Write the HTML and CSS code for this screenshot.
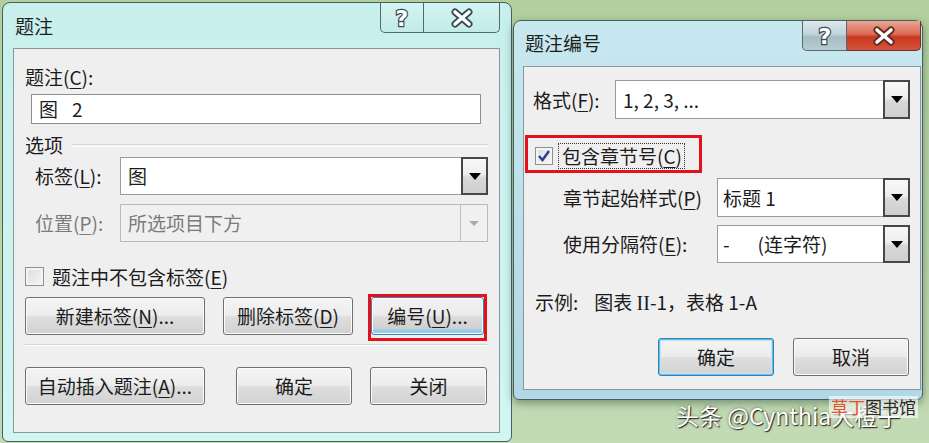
FILE: index.html
```html
<!DOCTYPE html>
<html lang="zh-CN">
  <head>
    <meta charset="utf-8">
    <title>题注</title>
    <link rel="stylesheet" href="styles.css">
  </head>
  <body>
    <div class="desktop">

      <!-- 题注 dialog -->
      <div class="dialog caption-dialog">
        <div class="titlebar">
          <span class="title">题注</span>
          <div class="caption-buttons">
            <span class="cbtn help">
              <svg width="20" height="26" viewBox="0 0 20 26"><text x="10" y="21" text-anchor="middle">?</text></svg>
            </span>
            <span class="cbtn close">
              <svg width="26" height="20" viewBox="0 0 26 20"><path class="x-outline" d="M6 4 L20 16 M20 4 L6 16"/><path class="x-fill" d="M6 4 L20 16 M20 4 L6 16"/></svg>
            </span>
          </div>
        </div>

        <div class="client">
          <div class="caption-label">题注(<u>C</u>):</div>
          <div class="textbox"><span>图</span><span class="caption-num">2</span></div>

          <div class="group-head"><span>选项</span><i class="rule"></i></div>

          <div class="field-row">
            <span class="field-name">标签(<u>L</u>):</span>
            <div class="combo label-combo"><span class="combo-value">图</span><span class="combo-drop"></span></div>
          </div>
          <div class="field-row is-disabled">
            <span class="field-name">位置(<u>P</u>):</span>
            <div class="combo label-combo"><span class="combo-value">所选项目下方</span><span class="combo-drop"></span></div>
          </div>

          <div class="check exclude-check">
            <span class="check-box"></span>
            <span>题注中不包含标签(<u>E</u>)</span>
          </div>

          <div class="button-row label-actions">
            <button class="btn btn-new">新建标签(<u>N</u>)...</button>
            <button class="btn btn-delete">删除标签(<u>D</u>)</button>
            <button class="btn btn-number is-hot">编号(<u>U</u>)...<span class="mark"></span></button>
          </div>

          <div class="etched"></div>

          <div class="button-row caption-actions">
            <button class="btn btn-auto">自动插入题注(<u>A</u>)...</button>
            <button class="btn btn-ok">确定</button>
            <button class="btn btn-close">关闭</button>
          </div>
        </div>
      </div>

      <!-- 题注编号 dialog -->
      <div class="dialog numbering-dialog">
        <div class="titlebar">
          <span class="title">题注编号</span>
          <div class="caption-buttons">
            <span class="cbtn help">
              <svg width="20" height="26" viewBox="0 0 20 26"><text x="10" y="21" text-anchor="middle">?</text></svg>
            </span>
            <span class="cbtn close">
              <svg width="26" height="20" viewBox="0 0 26 20"><path class="x-outline" d="M6 4 L20 16 M20 4 L6 16"/><path class="x-fill" d="M6 4 L20 16 M20 4 L6 16"/></svg>
            </span>
          </div>
        </div>

        <div class="client">
          <div class="field-row format-row">
            <span class="field-name">格式(<u>F</u>):</span>
            <div class="combo"><span class="combo-value">1, 2, 3, ...</span><span class="combo-drop"></span></div>
          </div>

          <div class="chapter-toggle">
            <span class="check-box is-checked">
              <svg width="14" height="14" viewBox="0 0 14 14"><path d="M2 7 L5.5 11 L12 2"/></svg>
            </span>
            <span class="focus-text">包含章节号(<u>C</u>)</span>
            <span class="mark"></span>
          </div>

          <div class="field-row sub-row">
            <span class="field-name">章节起始样式(<u>P</u>)</span>
            <div class="combo"><span class="combo-value">标题 1</span><span class="combo-drop"></span></div>
          </div>
          <div class="field-row sub-row">
            <span class="field-name">使用分隔符(<u>E</u>):</span>
            <div class="combo"><span class="combo-value"><span>-</span><span class="sep-name">(连字符)</span></span><span class="combo-drop"></span></div>
          </div>

          <div class="example"><span class="example-head">示例:</span>图表 <span class="roman">II</span>-1，表格 1-A</div>

          <div class="button-row dialog-actions">
            <button class="btn is-default">确定</button>
            <button class="btn">取消</button>
          </div>
        </div>
      </div>

    </div>

    <div class="watermark">头条 @Cynthia大橙子</div>
    <div class="stamp"><em>草丁</em>图书馆</div>
  </body>
</html>
```

FILE: styles.css
```css
html, body {
    margin: 0;
}

body {
    position: relative;
    width: 929px;
    height: 443px;
    overflow: hidden;

    font-family: "Noto Sans CJK SC", "Microsoft YaHei", sans-serif;
    font-size: 19px;
    line-height: 24px;
    color: #1b1b1b;

    background: linear-gradient(to bottom, #b3cf9e 0%, #bad5a8 55%, #c3dbb5 100%);
}

u {
    text-decoration-thickness: 1px;
    text-underline-offset: 3px;
}

.desktop {
    display: flex;
    align-items: flex-start;
    padding: 2px 0 0 2px;
}

/* window frames */

.dialog {
    box-sizing: border-box;
    display: flex;
    flex-direction: column;

    border: 1px solid #4a5d5f;
    border-radius: 8px 8px 6px 6px;
}

.caption-dialog {
    width: 510px;
    height: 440px;
    padding: 0 11px 8px 10px;

    background: linear-gradient(to bottom, #c7f0ec, #d2f6f2);
}

.numbering-dialog {
    width: 410px;
    height: 380px;
    margin: 18px 0 0 1px;
    padding: 0 1px 9px 9px;

    background: linear-gradient(to bottom, #c8e8f0, #b0d8e6);
    box-shadow: 0 3px 8px rgba(40, 70, 45, .5);
}

.titlebar {
    display: flex;
    justify-content: space-between;
    align-items: flex-start;
    height: 45px;
    flex: none;
}

.title {
    padding: 11px 0 0 2px;
    font-size: 19px;
    color: #1e1e1e;
}

.numbering-dialog .title {
    padding-top: 10px;
}

.caption-buttons {
    display: flex;
}

.cbtn {
    box-sizing: border-box;
    display: flex;
    justify-content: center;
    align-items: center;
    height: 30px;

    border: 1px solid #55696c;
    border-top: none;

    background: linear-gradient(to bottom, #d3f5f2, #c2ebe7);
}

.cbtn.help {
    width: 44px;
    border-bottom-left-radius: 5px;
}

.cbtn.close {
    width: 76px;
    border-left: none;
    border-bottom-right-radius: 5px;
}

.numbering-dialog .cbtn.help {
    width: 45px;
    background: linear-gradient(to bottom, #dce8ec 0%, #c2d4db 45%, #a6bcc5 55%, #b9ccd3 100%);
}

.numbering-dialog .cbtn.close {
    width: 74px;
    border-color: #6a3028;
    background: linear-gradient(to bottom, #eaa595 0%, #dc6a55 45%, #c9371f 55%, #d6543c 100%);
}

.cbtn text {
    font-family: "DejaVu Sans", sans-serif;
    font-size: 22px;
    font-weight: 700;
    fill: #fff;
    stroke: #3a4a50;
    stroke-width: 2.4px;
    paint-order: stroke fill;
}

.x-outline {
    stroke: #3a4a50;
    stroke-width: 7px;
    stroke-linecap: round;
}

.x-fill {
    stroke: #fff;
    stroke-width: 3.6px;
    stroke-linecap: round;
}

.numbering-dialog .x-outline {
    stroke: #5e2a22;
}

.client {
    box-sizing: border-box;
    display: flex;
    flex-direction: column;
    flex: 1;
    padding: 0 11px;

    border: 1px solid #8a989c;
    background: #f0eff0;
}

/* fields */

.caption-label {
    margin-top: 16px;
}

.textbox {
    box-sizing: border-box;
    display: flex;
    align-items: center;
    height: 30px;
    width: 450px;
    margin: 5px 0 0 6px;
    padding-left: 7px;

    border: 1px solid #8d8d8d;
    background: #fff;
}

.caption-num {
    margin-left: 14px;
}

.group-head {
    display: flex;
    align-items: center;
    margin-top: 9px;
}

.rule {
    flex: 1;
    height: 1px;
    margin-left: 9px;
    border-top: 1px solid #d9d9d9;
    border-bottom: 1px solid #fff;
}

.field-row {
    display: flex;
    align-items: center;
}

.field-name {
    flex: none;
}

.combo {
    box-sizing: border-box;
    display: flex;
    align-items: center;
    height: 38px;

    border: 1px solid #9b9b9b;
    background: #fff;
}

.combo-value {
    flex: 1;
    padding-left: 7px;
    white-space: pre;
}

.combo-drop {
    box-sizing: border-box;
    align-self: stretch;
    display: flex;
    justify-content: center;
    align-items: center;
    width: 27px;
    margin: -1px -1px -1px 0;

    border: 2px solid #474747;
    background: linear-gradient(to bottom, #f8f8f8 0%, #eeeeee 45%, #d8d8d8 55%, #cfcfcf 100%);
}

.combo-drop::after {
    content: "";
    border-left: 6px solid transparent;
    border-right: 6px solid transparent;
    border-top: 7px solid #000;
}

.caption-dialog .field-row {
    padding-left: 10px;
}

.caption-dialog .field-row .field-name {
    width: 85px;
}

.label-combo {
    width: 368px;
}

.caption-dialog .field-row:first-of-type {
    margin-top: 14px;
}

.caption-dialog .field-row.is-disabled {
    margin-top: 9px;
}

.is-disabled .field-name,
.is-disabled .combo-value {
    color: #7b7b7b;
}

.is-disabled .combo {
    border-color: #b9b9b9;
    background: #f0f0f0;
}

.is-disabled .combo-drop {
    margin: 0;
    border: 1px solid #c2c2c2;
    border-width: 0 0 0 1px;
    background: #f0f0f0;
}

.is-disabled .combo-drop::after {
    border-left-width: 5px;
    border-right-width: 5px;
    border-top: 5px solid #aaaaaa;
}

/* checkboxes */

.check {
    display: flex;
    align-items: center;
    height: 19px;
}

.exclude-check {
    margin-top: 25px;
}

.check-box {
    box-sizing: border-box;
    display: flex;
    justify-content: center;
    align-items: center;
    width: 19px;
    height: 19px;
    margin-right: 8px;

    border: 1px solid #8e8f8f;
    background: linear-gradient(135deg, #dcdcdc, #f6f6f6);
    box-shadow: inset 0 0 0 2px #f4f4f4;
}

.check-box path {
    fill: none;
    stroke: #2c3f8e;
    stroke-width: 2.4px;
}

/* buttons */

.button-row {
    display: flex;
}

.btn {
    position: relative;
    box-sizing: border-box;
    height: 38px;
    padding: 0;

    border: 1px solid #707070;
    border-radius: 3px;

    font: inherit;
    color: #1b1b1b;

    background: linear-gradient(to bottom, #f4f4f4 0%, #ececec 48%, #dedede 52%, #d2d2d2 100%);
    box-shadow: inset 0 0 0 1px #fbfbfb;
}

.label-actions {
    margin-top: 11px;
}

.btn-new,
.btn-auto {
    width: 180px;
}

.btn-delete {
    width: 130px;
    margin-left: 18px;
}

.btn-number {
    width: 113px;
    margin-left: 18px;
}

.btn.is-hot {
    border-color: #3c7fb1;
    background: linear-gradient(to bottom, #f2f2f2 0%, #ebebeb 48%, #dcdcdc 52%, #d0d0d0 85%, #8fcbea 90%, #9ad3ee 100%);
}

.mark {
    position: absolute;
    border: 3px solid #e2121b;
    pointer-events: none;
}

.btn-number .mark {
    top: -4px;
    left: -4px;
    right: -4px;
    bottom: -7px;
}

.etched {
    height: 0;
    margin-top: 9px;
    border-top: 1px solid #d5d5d5;
    border-bottom: 1px solid #fff;
}

.caption-actions {
    margin-top: 21px;
}

.btn-ok {
    width: 116px;
    margin-left: 31px;
}

.btn-close {
    width: 117px;
    margin-left: 18px;
}

/* 题注编号 contents */

.numbering-dialog .client {
    padding: 0 10px 0 9px;
}

.format-row {
    margin-top: 13px;
}

.format-row .field-name {
    width: 82px;
}

.format-row .combo {
    flex: 1;
    height: 39px;
}

.chapter-toggle {
    position: relative;
    box-sizing: border-box;
    display: flex;
    align-items: center;
    width: 177px;
    height: 38px;
    margin: 16px 0 0 -8px;
    padding: 3px 0 0 10px;
}

.chapter-toggle .mark {
    inset: 0;
}

.chapter-toggle .check-box {
    width: 18px;
    height: 18px;
    margin-right: 6px;
}

.focus-text {
    padding: 0 2px 0 3px;
    outline: 1px dotted #333;
    outline-offset: 0;
}

.sub-row {
    padding-left: 30px;
    margin-top: 5px;
}

.sub-row + .sub-row {
    margin-top: 8px;
}

.sub-row .field-name {
    width: 154px;
}

.sub-row .combo {
    flex: 1;
    height: 39px;
}

.sub-row .combo-value {
    padding-left: 5px;
}

.sub-row + .sub-row .combo {
    height: 38px;
}

.sep-name {
    margin-left: 28px;
}

.example {
    margin-top: 27px;
    padding-left: 2px;
}

.example-head {
    margin-right: 16px;
}

.roman {
    font-family: "Liberation Serif", serif;
    font-size: 20px;
}

.dialog-actions {
    justify-content: flex-end;
    gap: 19px;
    margin-top: 23px;
    padding-right: 1px;
}

.dialog-actions .btn {
    width: 116px;
}

.btn.is-default {
    border-color: #3a7db0;
    box-shadow: inset 0 0 0 1px #5fc2ee, inset 0 0 0 2px #bfe6f8;
}

/* site marks */

.watermark {
    position: absolute;
    left: 676px;
    top: 401px;

    font-size: 23px;
    line-height: 28px;
    color: #fff;
    text-shadow: 1px 1px 1px rgba(0, 0, 0, .8), 0 0 3px rgba(0, 0, 0, .5);
}

.stamp {
    position: absolute;
    left: 829px;
    top: 396px;
    padding: 0 2px;

    font-size: 17px;
    line-height: 22px;
    color: #2a2a2a;

    background: rgba(255, 255, 255, .6);
}

.stamp em {
    font-style: normal;
    color: #e4542c;
}
```
